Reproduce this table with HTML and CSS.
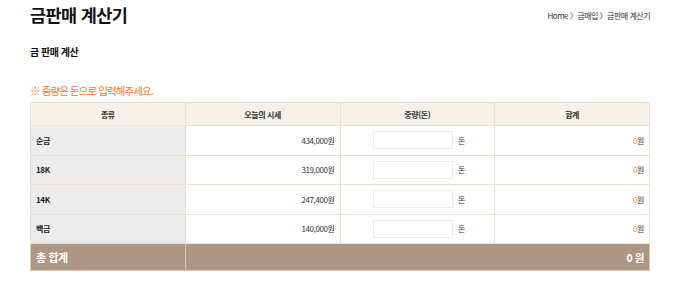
FILE: index.html
```html
<!DOCTYPE html>
<html lang="ko">
<head>
<meta charset="utf-8">
<link rel="stylesheet" href="styles.css">
</head>
<body>
<div class="page">
  <div class="top">
    <h1 class="title">금판매 계산기</h1>
    <div class="crumb">Home 〉금매입 〉금판매 계산기</div>
  </div>
  <h2 class="sub">금 판매 계산</h2>
  <p class="notice">※ 중량은 돈으로 입력해주세요.</p>
  <table class="calc">
    <thead>
      <tr><th>종류</th><th>오늘의 시세</th><th>중량(돈)</th><th>합계</th></tr>
    </thead>
    <tbody>
      <tr><td class="kind">순금</td><td class="price">434,000원</td><td class="wt"><span class="inp"></span><span class="don">돈</span></td><td class="sum"><em>0</em>원</td></tr>
      <tr><td class="kind">18K</td><td class="price">319,000원</td><td class="wt"><span class="inp"></span><span class="don">돈</span></td><td class="sum"><em>0</em>원</td></tr>
      <tr><td class="kind">14K</td><td class="price">247,400원</td><td class="wt"><span class="inp"></span><span class="don">돈</span></td><td class="sum"><em>0</em>원</td></tr>
      <tr><td class="kind">백금</td><td class="price">140,000원</td><td class="wt"><span class="inp"></span><span class="don">돈</span></td><td class="sum"><em>0</em>원</td></tr>
    </tbody>
    <tfoot>
      <tr><td class="tlabel">총 합계</td><td class="ttotal" colspan="3">0 원</td></tr>
    </tfoot>
  </table>
</div>
</body>
</html>
```
FILE: styles.css
```css
* { box-sizing: border-box; }
html, body { margin: 0; padding: 0; background: #fff; }
body {
  font-family: "Noto Sans CJK KR", "Noto Sans", sans-serif;
  color: #222;
}
.page { width: 620px; margin-left: 30px; }
.top {
  display: flex;
  justify-content: space-between;
  align-items: center;
  height: 30px;
}
.title {
  margin: 0;
  font-size: 17.5px;
  font-weight: 700;
  letter-spacing: -0.6px;
  color: #111;
  line-height: 30px;
}
.crumb {
  font-size: 8px;
  letter-spacing: -0.5px;
  color: #333;
}
.sub {
  margin: 14px 0 0;
  font-size: 10px;
  font-weight: 700;
  letter-spacing: -0.5px;
  line-height: 16px;
  color: #111;
}
.notice {
  margin: 23px 0 0;
  font-size: 10.5px;
  letter-spacing: -0.9px;
  line-height: 16px;
  color: #f07b35;
}
.calc {
  margin-top: 3px;
  width: 620px;
  border-collapse: collapse;
  table-layout: fixed;
  font-size: 8px;
  letter-spacing: -0.4px;
}
.calc th, .calc td {
  border: 1px solid #ece1c8;
  padding: 0 5px;
}
.calc th {
  background: #f5f1e8;
  height: 23px;
  font-weight: 700;
  color: #333;
  border-top-color: #e5d7b8;
}
.calc tbody td { height: 29.5px; }
.kind { background: #ececec; font-weight: 700; color: #222; }
.price { text-align: right; color: #333; }
.wt { text-align: center; }
.inp {
  display: inline-block;
  width: 80px;
  height: 18px;
  margin-left: 3px;
  border: 1px solid #ececec;
  background: #fff;
  vertical-align: middle;
}
.don { display: inline-block; margin-left: 5px; vertical-align: middle; color: #333; }
.sum { text-align: right; color: #333; }
.sum em { font-style: normal; color: #f39237; }
.calc tfoot td {
  background: #ad9683;
  color: #fff;
  height: 27px;
  font-weight: 700;
  border-color: #d7c6b3;
}
.tlabel { font-size: 11px; }
.ttotal { text-align: right; font-size: 10.5px; }
```
